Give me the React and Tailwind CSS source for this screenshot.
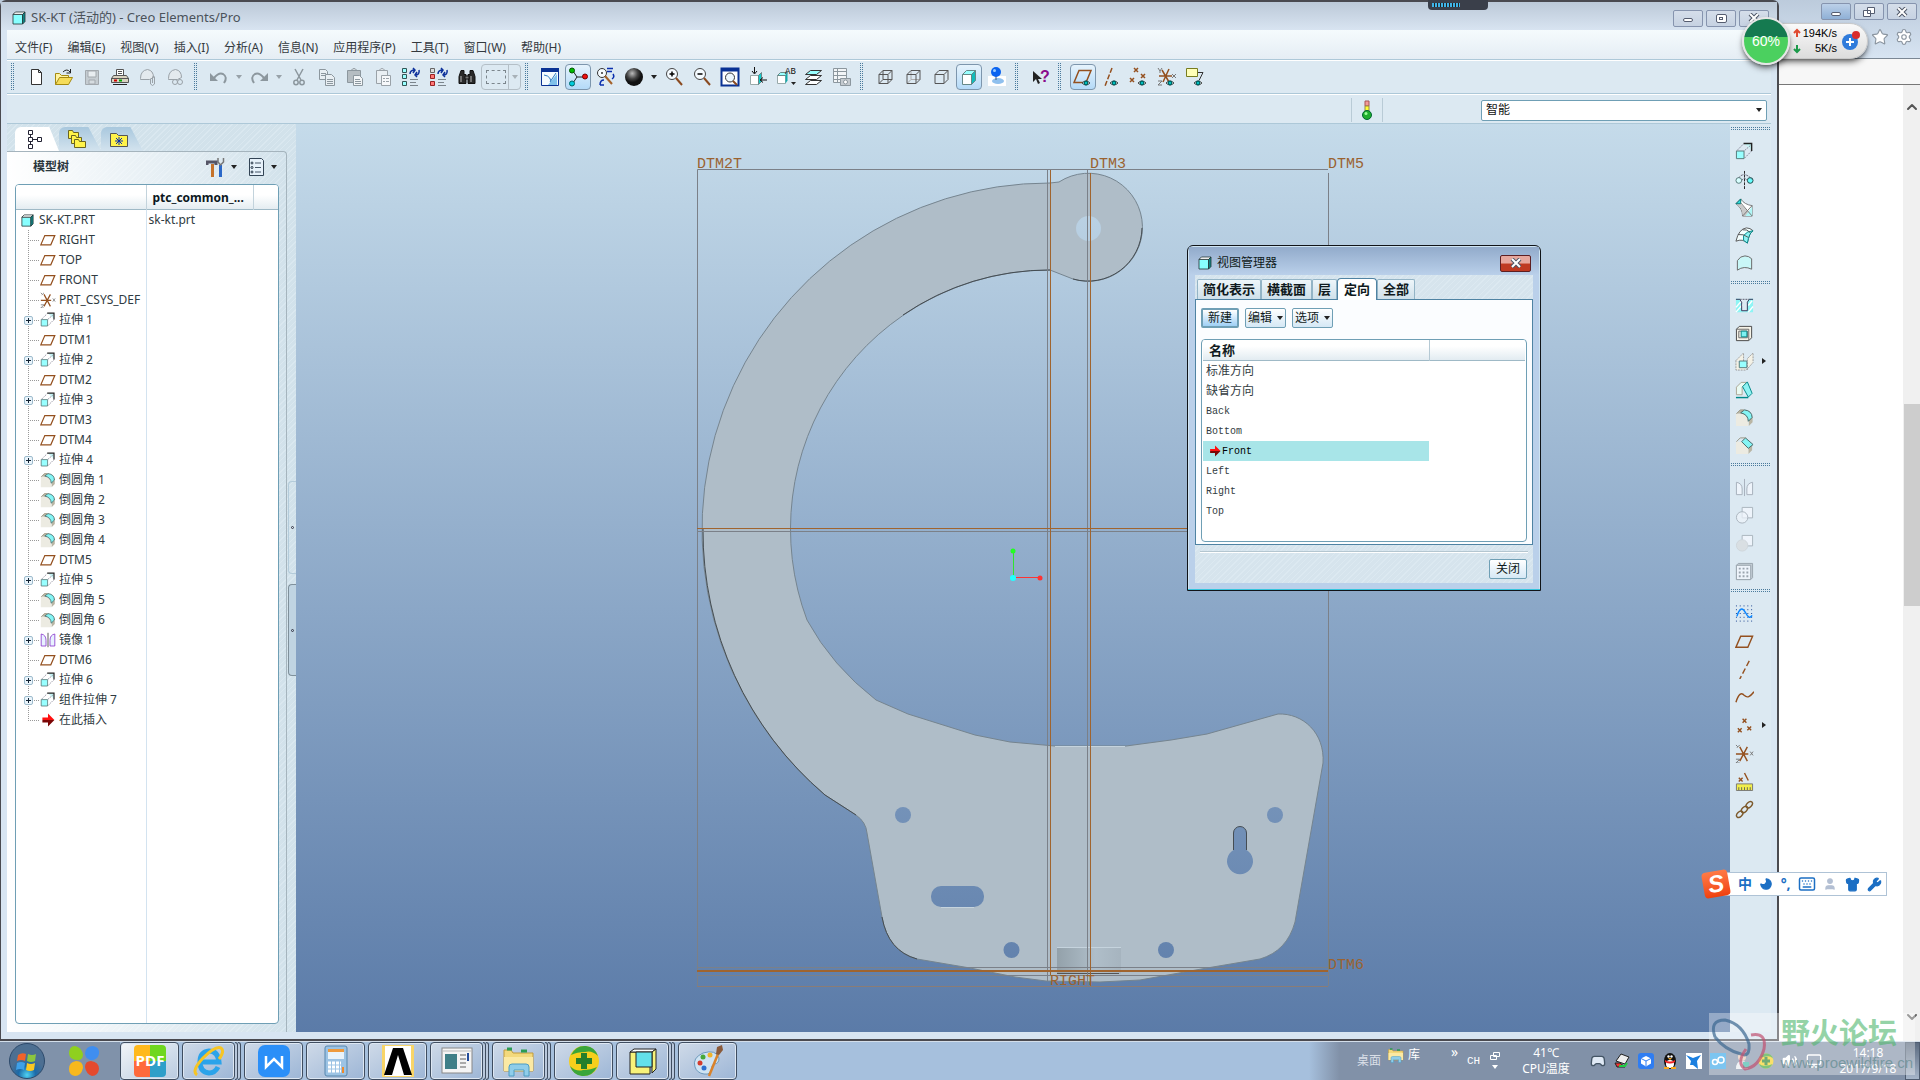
import { Star, Settings, ChevronUp, ChevronDown, Moon, Keyboard, User, Shirt, Wrench, Volume2, Monitor, Gamepad2 } from 'lucide-react';

const MENUS = ['文件(F)', '编辑(E)', '视图(V)', '插入(I)', '分析(A)', '信息(N)', '应用程序(P)', '工具(T)', '窗口(W)', '帮助(H)'];

const TREE = [
  { icon: 'plane', label: 'RIGHT' },
  { icon: 'plane', label: 'TOP' },
  { icon: 'plane', label: 'FRONT' },
  { icon: 'csys', label: 'PRT_CSYS_DEF' },
  { icon: 'extrude', label: '拉伸 1', plus: true },
  { icon: 'plane', label: 'DTM1' },
  { icon: 'extrude', label: '拉伸 2', plus: true },
  { icon: 'plane', label: 'DTM2' },
  { icon: 'extrude', label: '拉伸 3', plus: true },
  { icon: 'plane', label: 'DTM3' },
  { icon: 'plane', label: 'DTM4' },
  { icon: 'extrude', label: '拉伸 4', plus: true },
  { icon: 'round', label: '倒圆角 1' },
  { icon: 'round', label: '倒圆角 2' },
  { icon: 'round', label: '倒圆角 3' },
  { icon: 'round', label: '倒圆角 4' },
  { icon: 'plane', label: 'DTM5' },
  { icon: 'extrude', label: '拉伸 5', plus: true },
  { icon: 'round', label: '倒圆角 5' },
  { icon: 'round', label: '倒圆角 6' },
  { icon: 'mirror', label: '镜像 1', plus: true },
  { icon: 'plane', label: 'DTM6' },
  { icon: 'extrude', label: '拉伸 6', plus: true },
  { icon: 'extrude', label: '组件拉伸 7', plus: true },
  { icon: 'arrow', label: '在此插入' },
];

const VIEWS = ['标准方向', '缺省方向', 'Back', 'Bottom', 'Front', 'Left', 'Right', 'Top'];

// '|' is a grip, 'v' a greyed drop-down caret, 'V' an enabled one
const TOOLBAR = [
  '|', 'new', 'open', 'save', 'print', 'attach', 'link',
  '|', 'undo', 'v', 'redo', 'v', 'cut', 'copy', 'paste', 'pasteSpecial', 'regen', 'regenRed', 'find', 'select',
  '|', 'sketchView', 'spin', 'orient', 'sphere', 'V', 'zoomIn', 'zoomOut', 'zoomFit', 'reorient', 'viewList', 'layers', 'viewMgr',
  '|', 'wire', 'hidden', 'noHidden', 'shaded', 'render',
  '|', 'help',
  '|', 'planeEye', 'axisEye', 'pointEye', 'csysEye', 'noteEye',
];
const PRESSED = ['spin', 'shaded', 'planeEye'];

const SIDEBAR = [
  '|', 'extrude', 'revolve', 'sweep', 'boundary', 'style',
  '|', 'hole', 'shell', 'rib', 'draft', 'round', 'chamfer',
  '|', 'mirrorOff', 'merge', 'trim', 'pattern',
  '|', 'sketch', 'plane', 'axis', 'curve', 'points', 'csys', 'analysis', 'chain',
];
const FLYOUT = ['rib', 'points'];

const BR = '#94501f';
const CY = '#98ffff';

function Eye() {
  return (
    <g stroke="none">
      <path d="M9 16q4-4 8 0q-4 4-8 0" fill="#fff" stroke="#444" strokeWidth="1" />
      <circle cx="13" cy="16" r="2.4" fill="#066" />
      <circle cx="13" cy="16" r="1" fill="#0dd" />
    </g>
  );
}

const cubeEdges = 'M4 7.500h9v9h-9zM13 7.500l4-4v9l-4 4M4 7.500l4-4h9';

const ICONS = {
  new: <path d="M5.500 2.500h7l3 3v12h-10zM12.500 2.500v3h3" fill="#fff" stroke="#333" />,
  open: (
    <g>
      <path d="M1.500 17.500v-11h4l2 2h7v3" fill="#fff3a0" stroke="#a58a10" />
      <path d="M1.500 17.500l4-7h13l-4 7z" fill="#f5dc5a" stroke="#a58a10" />
      <path d="M9 5q4-4 7 0M16.500 2v4h-4" stroke="#222" />
    </g>
  ),
  save: (
    <g stroke="#a3a9ae">
      <path d="M3.500 3.500h13v14h-13z" fill="#c5ccd1" />
      <path d="M6 4h8v6h-8z" fill="#e8edf0" />
      <path d="M7 13h6v4h-6z" fill="#d6dce0" />
    </g>
  ),
  print: (
    <g stroke="#555">
      <path d="M6.500 8.500v-6h7v6M8 4.500h4M8 6.500h4" fill="#fff" />
      <path d="M3.500 8.500h13l2 3h-17zM1.500 11.500h17v4h-17z" fill="#d9d2c0" />
      <path d="M3 17.500h14" stroke="#222" />
      <path d="M4 13.500h3" stroke="#c00" strokeWidth="2" />
      <path d="M9 13.500h3" stroke="#0a0" strokeWidth="2" />
    </g>
  ),
  attach: (
    <g stroke="#9aa2a8">
      <path d="M2.500 11.500q0-8 7-9q6 1 6 8l-4 2h-9z" fill="#e4eaee" />
      <path d="M12.500 12v5q2 3 4 0v-7q-1-2-2 0v6" fill="none" />
    </g>
  ),
  link: (
    <g stroke="#9aa2a8">
      <path d="M2.500 11.500q0-8 7-9q6 1 6 8l-4 2h-9z" fill="#e4eaee" />
      <circle cx="9" cy="15" r="2.500" />
      <circle cx="14" cy="15" r="2.500" />
    </g>
  ),
  undo: (
    <g>
      <path d="M5 11q5-6 9-4q5 3 1 9" stroke="#8c979e" strokeWidth="2" />
      <path d="M1 6v8h8z" fill="#8c979e" />
    </g>
  ),
  redo: (
    <g>
      <path d="M15 11q-5-6-9-4q-5 3-1 9" stroke="#8c979e" strokeWidth="2" />
      <path d="M19 6v8h-8z" fill="#8c979e" />
    </g>
  ),
  cut: (
    <g stroke="#8c979e" strokeWidth="1.5">
      <path d="M6 2l6 11M14 2l-6 11" />
      <circle cx="7" cy="15.500" r="2.200" />
      <circle cx="13" cy="15.500" r="2.200" />
    </g>
  ),
  copy: (
    <g stroke="#8c979e" fill="#e9eff3">
      <path d="M2.500 2.500h6l2 2v8h-8zM4 6.500h5M4 8.500h5" />
      <path d="M8.500 7.500h6l3 3v8h-9zM10 12.500h6M10 14.500h6M10 16.500h6" />
    </g>
  ),
  paste: (
    <g stroke="#8c979e">
      <path d="M2.500 3.500h13v12h-13z" fill="#b5bdc2" />
      <path d="M6 3.500q3-4 6 0z" fill="#dde3e6" />
      <path d="M8.500 8.500h6l3 3v7h-9zM10 12.500h5M10 14.500h6M10 16.500h6" fill="#f2f5f7" />
    </g>
  ),
  pasteSpecial: (
    <g stroke="#9aa2a8" fill="#e9eff3">
      <path d="M3.500 3.500h11v13h-11z" />
      <path d="M6 3.500q3-4 6 0z" />
      <path d="M8.500 8.500h9v10h-9zM10 11.500h2M13 11.500h3M10 14.500h2M13 14.500h3" fill="#f6f8fa" />
    </g>
  ),
  regen: (
    <g>
      <path d="M1.500 1.500h4v4h-4zM1.500 7.500h4v4h-4zM1.500 14.500h4v4h-4z" fill={CY} stroke="#355" />
      <path d="M9 7q0-4 5-4M12 1l2 2-2 3M18 3q1 5-4 5M16 5l-2 3 2 2" stroke="#0b2f9a" strokeWidth="1.500" />
      <path d="M9 12.500h8M9 15.500h6M9 18.500h8" stroke="#7b858c" />
    </g>
  ),
  regenRed: (
    <g>
      <path d="M1.500 1.500h4v4h-4z" fill="#ddd" stroke="#666" />
      <path d="M1.500 7.500h4v4h-4zM1.500 14.500h4v4h-4z" fill="#f77" stroke="#922" />
      <path d="M9 7q0-4 5-4M12 1l2 2-2 3M18 3q1 5-4 5M16 5l-2 3 2 2" stroke="#0b2f9a" strokeWidth="1.500" />
      <path d="M9 12.500h8M9 15.500h6M9 18.500h8" stroke="#7b858c" />
    </g>
  ),
  find: (
    <g fill="#2a2a2a" stroke="#111">
      <path d="M4 3.500h3v4h2v9h-7v-7zM13 3.500h3l2 6v7h-7v-9h2z" />
      <path d="M8 9h4v3h-4z" fill="#777" />
      <path d="M4 9v6M14 9v6" stroke="#bbb" />
    </g>
  ),
  sketchView: (
    <g>
      <path d="M1.500 1.500h17v17h-17z" fill="#f4fbff" stroke="#0a3294" />
      <path d="M1 3h18" stroke="#0a3294" strokeWidth="4" />
      <path d="M4 8q8 1 7 10M16 6l-6 9" stroke="#2d79c0" />
      <path d="M8 18l9-11v11z" fill="#7fc0ea" />
    </g>
  ),
  spin: (
    <g>
      <path d="M5 4l4 6h8M9 10l-4 6" stroke="#222" />
      <circle cx="4" cy="3.500" r="2.500" fill="#0b0" stroke="#050" />
      <circle cx="17" cy="9.500" r="2.500" fill="#e11" stroke="#700" />
      <circle cx="4" cy="16.500" r="2.500" fill="#0cd" stroke="#066" />
    </g>
  ),
  orient: (
    <g>
      <circle cx="6" cy="6" r="4.500" fill="#f5fbff" stroke="#333" />
      <circle cx="6" cy="6" r="1" fill="#333" />
      <path d="M9 9l7 8" stroke="#a5622a" strokeWidth="2" />
      <path d="M11 1.500h6M11 4.500h5M17 7q2 3-1 5M4 18q0-5 4-5M4 18h4" stroke="#0a2fae" strokeWidth="1.500" />
    </g>
  ),
  sphere: <circle cx="10" cy="10" r="9" fill="url(#ball)" />,
  zoomIn: (
    <g>
      <circle cx="8" cy="7" r="5.500" fill="#f5fbff" stroke="#444" />
      <path d="M5.500 7h5M8 4.500v5" stroke="#000" strokeWidth="1.500" />
      <path d="M12 11l6 7" stroke="#8a4a20" strokeWidth="2" />
    </g>
  ),
  zoomOut: (
    <g>
      <circle cx="8" cy="7" r="5.500" fill="#f5fbff" stroke="#444" />
      <path d="M5.500 7h5" stroke="#000" strokeWidth="1.500" />
      <path d="M12 11l6 7" stroke="#8a4a20" strokeWidth="2" />
    </g>
  ),
  zoomFit: (
    <g>
      <path d="M1.500 1.500h17v17h-17z" fill="#fff" stroke="#0a3294" strokeWidth="2" />
      <path d="M2 3h16" stroke="#0a3294" strokeWidth="3" />
      <circle cx="10" cy="10.500" r="4.500" fill="#eef8ff" stroke="#333" />
      <path d="M13 14l4 4" stroke="#8a4a20" strokeWidth="2" />
    </g>
  ),
  reorient: (
    <g>
      <path d="M2.500 8.500h8v9h-8z" fill="#fff" stroke="#9aa" />
      <path d="M10.500 8.500l3-3v9l-3 3z" fill="#1cc" stroke="#688" />
      <path d="M6.500 0v6M4 4l2.500 3 2.500-3M19 13h-6M15 10.500l-3 2.500 3 2.500" stroke="#111" />
    </g>
  ),
  viewList: (
    <g>
      <path d="M1.500 8.500h8v8h-8z" fill="#fff" stroke="#9aa" />
      <path d="M1.500 8.500l3-3h7l-2 3z" fill={CY} stroke="#688" />
      <path d="M9.500 8.500l2-3v8l-2 3z" fill="#1aa" />
      <text x="9" y="7" fontSize="9" fontFamily="Liberation Mono" fill="#111">AB</text>
      <path d="M15 15h5l-2.500 3z" fill="#222" />
    </g>
  ),
  layers: (
    <g stroke="#333">
      <path d="M1.500 17.500l5-4h11l-5 4z" fill="#fff" />
      <path d="M1.500 12.500l5-4h11l-5 4z" fill="#fff" />
      <path d="M1.500 7.500l5-4h11l-5 4z" fill={CY} />
    </g>
  ),
  viewMgr: (
    <g stroke="#8c979e">
      <path d="M1.500 1.500h13v14h-13zM1.500 4.500h13M1.500 8.500h13M1.500 12.500h13M5.500 1.500v14" fill="#f2f5f7" />
      <path d="M8.500 11.500h10v7h-10z" fill="#c4cacf" />
      <circle cx="13.500" cy="15" r="2" fill="#fff" />
    </g>
  ),
  wire: <path d={cubeEdges + 'M8 3.500v9h9M8 12.500l-4 4'} stroke="#555" />,
  hidden: (
    <g>
      <path d="M8 3.500v9h9M8 12.500l-4 4" stroke="#aaa" />
      <path d={cubeEdges} stroke="#555" />
    </g>
  ),
  noHidden: <path d={cubeEdges} stroke="#555" />,
  shaded: (
    <g stroke="#688">
      <path d="M3.500 7.500h9v10h-9z" fill="#fff" />
      <path d="M3.500 7.500l4-4h9l-4 4z" fill={CY} />
      <path d="M12.500 7.500l4-4v10l-4 4z" fill="#1bb" />
    </g>
  ),
  render: (
    <g>
      <path d="M1 9h18v10h-18z" fill="#fff" />
      <ellipse cx="11" cy="14" rx="6" ry="3" fill="#8fc0ee" />
      <path d="M9 8v5" stroke="#457" />
      <circle cx="9" cy="5" r="5" fill="#0a63f0" />
      <circle cx="7.500" cy="3.500" r="1.500" fill="#9cf" />
    </g>
  ),
  help: (
    <g>
      <path d="M3 4v11l3-3 2 5 2-1-2-4h4z" fill="#222" />
      <text x="10" y="15" fontSize="16" fontWeight="bold" fontFamily="Liberation Sans" fill="#8a0a8a">?</text>
    </g>
  ),
  plane: <path d="M6 4.500h12.500l-5 11.500h-12.500z" stroke={BR} strokeWidth="1.500" />,
  planeEye: <g><path d="M6 3.500h12l-5 12h-12z" stroke={BR} strokeWidth="1.500" /><Eye /></g>,
  axisEye: <g><path d="M11 1l-7 18" stroke={BR} strokeWidth="1.500" strokeDasharray="5 2" /><Eye /></g>,
  pointEye: <g><path d="M5 1l4 4M9 1l-4 4M1 11l4 4M5 11l-4 4M12 7l4 4M16 7l-4 4" stroke={BR} strokeWidth="1.500" /><Eye /></g>,
  csysEye: (
    <g>
      <path d="M2 9h13M5 3l7 12M12 2l-6 13" stroke={BR} strokeWidth="1.500" />
      <path d="M1 1l2 3 2-3M3 4v2M1 14h4l-4 4h4M15 7l4 4M19 7l-4 4" stroke="#777" />
      <Eye />
    </g>
  ),
  noteEye: (
    <g>
      <path d="M1.500 1.500h11v8h-11z" fill="#ffffb8" stroke="#777c20" />
      <path d="M13 5.500h5l-4 8" stroke="#333" />
      <Eye />
    </g>
  ),
  extrude: (
    <g>
      <path d="M10 2h7v6z" fill="#c4f4f5" />
      <path d="M2 9l7-7M10 9l7-6M10 17l8-8" stroke="#889" strokeDasharray="2 1" />
      <path d="M9 1.500h8.500v8" stroke="#222" strokeWidth="1.500" />
      <path d="M1.500 9.500h8v8h-8z" fill={CY} stroke="#577" />
    </g>
  ),
  revolve: (
    <g>
      <circle cx="4" cy="11" r="3" fill="#d8ffff" stroke="#577" />
      <circle cx="16" cy="11" r="3" fill="#6ff" stroke="#244" />
      <path d="M10 1v19" stroke="#222" strokeDasharray="3 1" />
      <path d="M4 8q6-7 14 2M7 11q3-4 6 0" stroke="#556" strokeDasharray="2 1" />
    </g>
  ),
  sweep: (
    <g>
      <path d="M1 6l5-5q4 6 12 7v11h-10q0-8-7-13z" fill="#fff" stroke="#777" />
      <path d="M2 6h4l11 12h-9q0-7-6-12z" fill="#c9c9c9" />
      <path d="M18 9l-7 10h7z" fill="#aff6f6" />
      <path d="M1 6l5-5v5z" fill="#3dd" stroke="#077" />
      <path d="M6 5l12 14M18 8l-10 11" stroke="#777" />
    </g>
  ),
  boundary: (
    <g stroke="#555">
      <path d="M1 16q3-13 11-14q4 0 7 3q-4 2-6 13q-5-5-12-2z" fill="#f4ffff" />
      <path d="M9 10q4-5 10-5q-4 2-6 13l-4-3z" fill="#8ff3f3" stroke="#088" />
      <path d="M3 9q6-1 11 3M8 4q5-1 8 3" />
    </g>
  ),
  style: <path d="M2.500 17v-10q3-5 8-5q4 0 7 3v11q-8-4-15 1z" fill="#c9f7f7" stroke="#666" />,
  hole: (
    <g>
      <path d="M1 3h4l2 3v10h6v-10l2-3h4v14h-18z" fill="#8ef5f5" />
      <path d="M1 12l6-7M1 17l7-8M14 17l5-6M14 10l4-5" stroke="#fff" strokeWidth="1.500" />
      <path d="M1 3.500h4l2 3v9h6v-9l2-3h4" stroke="#335" />
      <path d="M5 3.500h10" stroke="#556" strokeDasharray="2 1" />
    </g>
  ),
  shell: (
    <g>
      <path d="M1.500 5.500l3-3h13v12l-3 3h-13z" fill="#f6f3e8" stroke="#444" />
      <path d="M1.500 5.500h13v12M4 7.500h9v7h-9z" stroke="#666" />
      <path d="M6.500 7.500h6v6h-6z" fill="#7ef2f2" stroke="#088" />
    </g>
  ),
  rib: (
    <g stroke="#999">
      <path d="M1 9l8-8v10M1 9v10h11l7-8v-10l-6 6v12" fill="#f3f1e6" strokeDasharray="2 1" />
      <path d="M4.500 9.500h8v7h-8z" fill={CY} stroke="#577" />
    </g>
  ),
  draft: (
    <g>
      <path d="M1.500 7.500l5-5h6l-5 5v8h-6z" fill="#eafaf2" stroke="#aaa492" />
      <path d="M8 7l5-5 5 12-4 4z" fill="#8ff3f3" stroke="#088" />
      <path d="M1 18.500h13" stroke="#088" strokeWidth="1.500" />
    </g>
  ),
  round: (
    <g>
      <path d="M1.500 6l4-4h4q8 1 9 8v5l-4 4v-5q-1-8-9-8z" fill="#b9b5a4" />
      <path d="M1 6h5q8 1 8 8v5h-13z" fill="#ecebe2" />
      <path d="M6 5l4-3q8 1 8 8l-4 4q0-7-8-9" fill="#84f5f5" stroke="#466" />
      <path d="M1.500 6l4-4h4" stroke="#999683" />
    </g>
  ),
  chamfer: (
    <g>
      <path d="M14 13l4-4v6l-4 4z" fill="#b9b5a4" />
      <path d="M1 6h6l7 7v6h-13z" fill="#ecebe2" />
      <path d="M7 6l4-4 8 7-5 4z" fill="#84f5f5" stroke="#466" />
      <path d="M1.500 6l4-4h6" stroke="#999683" />
    </g>
  ),
  mirror: (
    <g fill="#e8f2ff" stroke="#8833cc">
      <path d="M1.500 2.500q6 1 6 8v7h-6zM18.500 2.500q-6 1-6 8v7h6z" />
      <path d="M10 1v18" stroke="#333" />
    </g>
  ),
  mirrorOff: (
    <g fill="#eef4fb" stroke="#a5afba">
      <path d="M1.500 4.500q6 1 6 7v6h-6zM18.500 4.500q-6 1-6 7v6h6z" />
      <path d="M10 1v18" />
    </g>
  ),
  merge: (
    <g fill="#eef4fb" stroke="#aab4be">
      <path d="M7.500 1.500h11v11h-11z" />
      <circle cx="7.500" cy="12" r="6" fillOpacity="0.700" />
    </g>
  ),
  trim: (
    <g fill="#eef4fb" stroke="#aab4be">
      <path d="M7.500 1.500h11v11h-11z" />
      <circle cx="7.500" cy="12" r="6" fill="#d9dfe3" stroke="#cfd6db" />
    </g>
  ),
  pattern: (
    <g stroke="#9aa4ae">
      <path d="M1.500 3.500l2-2h15v15l-2 2h-15z" fill="#c2ccd4" />
      <path d="M1.500 3.500h15v15h-15z" fill="#eef4fb" />
      <path d="M4 7h10M4 11h10M4 15h10" strokeWidth="2" strokeDasharray="2 2" />
    </g>
  ),
  sketch: (
    <g>
      <path d="M1 2h18M1 6h18M1 10h18M1 14h18M1 18h18" stroke="#113a8a" strokeDasharray="1 3" />
      <path d="M2 13q4-13 9-4q4 8 7 3" stroke="#0a86ff" strokeWidth="1.500" />
    </g>
  ),
  axis: <path d="M15 1l-10 19" stroke={BR} strokeWidth="1.500" strokeDasharray="6 3" />,
  curve: <path d="M1 15q4-13 9-7q4 4 10-4" stroke={BR} strokeWidth="1.500" />,
  points: <path d="M8 3l4 4M12 3l-4 4M3 13l4 4M7 13l-4 4M13 11l4 4M17 11l-4 4" stroke={BR} strokeWidth="1.500" />,
  csys: (
    <g>
      <path d="M1 10.500h13M5 3l8 15M13 3l-8 15" stroke={BR} strokeWidth="1.500" />
      <path d="M1 1l2 2 2-2M2 4l1-1M1 16h4l-4 4h4M16 8l3 4M19 8l-3 4" stroke="#777" />
    </g>
  ),
  analysis: (
    <g>
      <path d="M4 6l4 4M8 6l-4 4M10 1l4 8" stroke={BR} strokeWidth="1.500" />
      <path d="M1.500 12.500h17v7h-17z" fill="#f1ee4c" stroke="#777" />
      <path d="M4 16v3M7 16v3M10 16v3M13 16v3M16 16v3" stroke="#665" />
    </g>
  ),
  chain: (
    <g stroke="#7d5a2c" strokeWidth="1.500">
      <ellipse cx="5" cy="15" rx="4" ry="2.500" transform="rotate(-45 5 15)" />
      <ellipse cx="10" cy="10" rx="4" ry="2.500" transform="rotate(-45 10 10)" />
      <ellipse cx="15" cy="5" rx="4" ry="2.500" transform="rotate(-45 15 5)" />
    </g>
  ),
  arrow: (
    <g>
      <path d="M3 7h7v-5l8 8h-15z" fill="#ff1010" />
      <path d="M3 10h15l-8 8v-5h-7z" fill="#7c0606" />
    </g>
  ),
  part: (
    <g stroke="#233">
      <path d="M2.500 5.500h12v12h-12z" fill="#8ff" />
      <path d="M2.500 5.500l3-3h12l-3 3z" fill="#fff" />
      <path d="M14.500 5.500l3-3v12l-3 3z" fill="#188" />
    </g>
  ),
  modelTree: <path d="M3.500 1.500h4v4h-4zM3.500 8.500h4v4h-4zM3.500 15.500h4v4h-4zM12.500 8.500h4v4h-4zM5.500 5.500v3M5.500 12.500v3M7.500 10.500h5" fill="#fff" stroke="#223" />,
  folders: (
    <g fill="#fff34a" stroke="#6a6420">
      <path d="M1.500 9.500v-8h4l1 2h5v6z" />
      <path d="M4.500 14.500v-8h4l1 2h5v6z" />
      <path d="M7.500 18.500v-8h4l1 2h6v6z" />
    </g>
  ),
  favorites: (
    <g>
      <path d="M1.500 17.500v-13h6l2 2h9v11z" fill="#fff34a" stroke="#555" />
      <path d="M10 8v8M6 12h8M7 9l6 6M13 9l-6 6" stroke="#0a2fae" />
    </g>
  ),
  tools: (
    <g>
      <path d="M14.500 8v12" stroke="#2a68c8" strokeWidth="3" />
      <path d="M12 1v4l2.500 3 3-3v-4" stroke="#777" strokeWidth="1.500" />
      <path d="M1 8v-3h9v3" stroke="#556" strokeWidth="3" />
      <path d="M6.500 7v13" stroke="#c5722a" strokeWidth="3" />
    </g>
  ),
  settings: (
    <g>
      <path d="M3.500 1.500h12l2 2v15h-14z" fill="#e6f1fa" stroke="#345" />
      <path d="M9 6h6M9 10.500h6M9 15h6" stroke="#456" />
      <circle cx="6" cy="6" r="1" stroke="#234" />
      <circle cx="6" cy="10.500" r="1" stroke="#234" />
      <circle cx="6" cy="15" r="1" stroke="#234" />
    </g>
  ),
};

function Icon({ name, className = 'size-5' }) {
  return (
    <svg viewBox="0 0 20 20" fill="none" className={`shrink-0 ${className}`} aria-hidden="true">
      {ICONS[name]}
    </svg>
  );
}

function Caret({ className = 'text-[#222]' }) {
  return (
    <svg viewBox="0 0 8 8" className={`size-2 shrink-0 ${className}`} aria-hidden="true">
      <path d="M1 2h6l-3 4z" fill="currentColor" />
    </svg>
  );
}

function ToolItem({ name }) {
  if (name === '|') {
    return <span className="mr-[7px] ml-1 h-7 w-1 shrink-0 bg-[conic-gradient(at_1px_1px,transparent_75%,#4a7a9c_0)] bg-[length:2px_2px] first:ml-0" />;
  }
  if (name === 'v' || name === 'V') {
    return (
      <button aria-label="更多" className="flex w-3 items-center justify-center">
        <Caret className={name === 'V' ? 'text-[#222]' : 'text-[#98a2a9]'} />
      </button>
    );
  }
  if (name === 'select') {
    return (
      <button aria-label="select" className="flex h-[26px] w-10 items-center justify-between rounded-sm border border-[#b4bfc7] pl-1">
        <span className="h-3.5 w-5 border border-dashed border-[#7c868d]" />
        <span className="flex h-full w-3 items-center justify-center border-l border-[#b4bfc7]">
          <Caret className="text-[#a8b1b8]" />
        </span>
      </button>
    );
  }
  const pressed = PRESSED.includes(name);
  return (
    <button
      aria-label={name}
      className={`mx-px flex h-[26px] w-[26px] shrink-0 items-center justify-center rounded-sm border ${
        pressed ? 'border-[#7d96ad] bg-linear-to-b from-[#e6f3fc] to-[#b4daf8]' : 'border-transparent'
      }`}
    >
      <Icon name={name} />
    </button>
  );
}

function CloseMark() {
  return (
    <svg viewBox="0 0 12 10" className="h-2.5 w-3">
      <path d="M2 1l8 8M10 1l-8 8" stroke="#4d5566" strokeWidth="4" />
      <path d="M2 1l8 8M10 1l-8 8" stroke="#fff" strokeWidth="2" />
    </svg>
  );
}

function WindowButtons({ active }) {
  const base = 'flex h-[17px] w-[30px] items-center justify-center rounded-xs border border-[#8694ae] bg-linear-to-b';
  return (
    <div className="flex gap-[3px]">
      <button aria-label="minimize" className={`${base} ${active ? 'from-[#bcd0e8] to-[#8fb0d6]' : 'from-[#d5deea] to-[#c6d2e2]'}`}>
        <span className="mt-1 h-1 w-2.5 rounded-xs border border-[#555d70] bg-white" />
      </button>
      <button aria-label="restore" className={`${base} from-[#d5deea] to-[#c6d2e2]`}>
        {active ? (
          <svg viewBox="0 0 12 12" className="size-3">
            <path d="M4.500 1.500h7v6h-7zM.5 4.500h7v6h-7z" fill="#fff" stroke="#555d70" />
          </svg>
        ) : (
          <span className="flex h-[9px] w-[11px] items-center justify-center rounded-xs border border-[#555d70] bg-white">
            <span className="h-[3px] w-1 border border-[#555d70]" />
          </span>
        )}
      </button>
      <button aria-label="close" className={`${base} from-[#d5deea] to-[#c6d2e2]`}>
        <CloseMark />
      </button>
    </div>
  );
}

function ModelTree() {
  return (
    <aside className="relative flex w-[289px] shrink-0 flex-col bg-[repeating-linear-gradient(135deg,#d2e2eb_0_3px,#dae8f0_3px_4px)] pt-[3px]">
      <div className="flex h-6 items-end pl-2">
        <button aria-label="模型树" className="z-10 flex h-6 w-11 items-center rounded-t-md bg-white pl-2.5 [clip-path:polygon(0_0,78%_0,100%_100%,0_100%)]">
          <Icon name="modelTree" />
        </button>
        <button aria-label="文件夹" className="flex h-6 w-[42px] items-center rounded-t-md bg-linear-to-b from-[#a9c8de] to-[#d3e3ee] pl-2 [clip-path:polygon(0_0,70%_0,100%_100%,0_100%)]">
          <Icon name="folders" />
        </button>
        <button aria-label="收藏夹" className="flex h-6 w-[42px] items-center rounded-t-md bg-linear-to-b from-[#a9c8de] to-[#d3e3ee] pl-2 [clip-path:polygon(0_0,70%_0,100%_100%,0_100%)]">
          <Icon name="favorites" />
        </button>
      </div>
      <div className="mr-[9px] flex min-h-0 flex-1 flex-col rounded-tr border-t border-r border-[#a5b4bd] bg-linear-to-r from-white to-transparent pb-2 pl-2">
        <div className="flex h-8 items-center pr-2 pb-0.5 pl-[18px]">
          <h2 className="grow text-[12px] font-bold text-[#2a363d]">模型树</h2>
          <button aria-label="工具" className="mr-2 flex items-center gap-1">
            <Icon name="tools" />
            <Caret />
          </button>
          <button aria-label="设置" className="flex items-center gap-1">
            <Icon name="settings" />
            <Caret />
          </button>
        </div>
        <div className="mr-[7px] min-h-0 flex-1 overflow-hidden rounded border border-[#6f9fb5] bg-white">
          <table className="h-full w-full table-fixed border-collapse text-left text-[12px] leading-5 text-[#2f3b42]">
            <thead>
              <tr className="h-[25px] bg-linear-to-b from-white from-40% to-[#e2ebf0] shadow-[inset_0_-1px_#9fb9c6]">
                <th aria-label="名称" />
                <th className="w-[107px] border-l border-[#c3d3dc] pl-1.5 font-bold text-[#0b171d]">ptc_common_...</th>
                <th aria-label="空" className="w-[25px] border-l border-[#c3d3dc]" />
              </tr>
            </thead>
            <tbody>
              <tr className="h-5">
                <td className="p-0">
                  <div className="flex h-5 items-center gap-1 pl-1">
                    <Icon name="part" className="size-[15px]" />
                    SK-KT.PRT
                  </div>
                </td>
                <td colSpan={2} className="border-l border-[#d3e3f0] p-0 pl-0.5">sk-kt.prt</td>
              </tr>
              {TREE.map((row, i) => (
                <tr key={row.label} className="h-5">
                  <td className="p-0">
                    <div className="flex h-5 items-center">
                      <svg viewBox="0 0 24 20" className="h-5 w-6 shrink-0" fill="none" aria-hidden="true">
                        <path d={`M12.500 0v${i === TREE.length - 1 ? 10 : 20}M12 10.500h12`} stroke="#999" strokeDasharray="1 1" />
                        {row.plus && (
                          <g>
                            <rect x="8.500" y="6.500" width="8" height="8" rx="1.500" fill="#eaf4fb" stroke="#9fbccd" />
                            <path d="M10 10.500h5M12.500 8v5" stroke="#123" />
                          </g>
                        )}
                      </svg>
                      <Icon name={row.icon} className="mr-[3px] size-4" />
                      <span className="whitespace-nowrap">{row.label}</span>
                    </div>
                  </td>
                  <td colSpan={2} className="border-l border-[#d3e3f0] p-0" />
                </tr>
              ))}
              <tr>
                <td />
                <td colSpan={2} className="border-l border-[#d3e3f0]" />
              </tr>
            </tbody>
          </table>
        </div>
      </div>
      <div className="absolute top-[357px] right-0 flex h-[93px] w-2 items-center justify-center rounded-l-sm border border-r-0 border-[#b3cbda]">
        <span className="size-[3px] rounded-full border border-[#334]" />
      </div>
      <div className="absolute top-[460px] right-0 flex h-[92px] w-2 items-center justify-center rounded-l-sm border border-r-0 border-[#7f909b] bg-[#c0d4e2]">
        <span className="size-[3px] rounded-full border border-[#334]" />
      </div>
    </aside>
  );
}

const PART_OUTLINE =
  'M1059 182L1050 183A347 347 0 0 0 825 795L856 815Q866 822 867 833L882 917Q888 951 917 959L970 968L1015 977L1046 981L1100 982L1140 980L1207 968L1260 959Q1287 951 1295 922L1323 763C1325 733 1303 713 1278 714L1207 734L1171 740L1126 746H1055L1010 742L975 735L908 714L876 700Q832 666 807 620A259 259 0 0 1 1050 270L1073 279A54 54 0 1 0 1059 182Z';

function Viewport() {
  return (
    <main className="min-w-0 flex-1 bg-linear-to-b from-[#c5dbea] to-[#5b7ba8]">
      <svg viewBox="296 124 1434 908" className="block h-full w-full" role="img" aria-label="SK-KT">
        <defs>
          <linearGradient id="boss">
            <stop offset="0" stopColor="#93a1aa" />
            <stop offset="0.600" stopColor="#afbec9" />
            <stop offset="1" stopColor="#a6b4bf" />
          </linearGradient>
          <mask id="holes">
            <path d="M296 124h1434v908h-1434z" fill="#fff" />
            <circle cx="1088.500" cy="228.500" r="12.500" />
            <circle cx="903" cy="815" r="8" />
            <circle cx="1275" cy="815" r="8" />
            <circle cx="1011.500" cy="950" r="8" />
            <circle cx="1166" cy="950" r="8" />
            <rect x="931" y="886" width="53" height="21" rx="10" />
            <path d="M1233.500 850v-17a6.500 6.500 0 0 1 13 0v17a13 13 0 1 1-13 0z" />
          </mask>
        </defs>
        <path d={PART_OUTLINE} fill="#afbdc8" stroke="#75848f" mask="url(#holes)" />
        {/* darker edges on the shadow side */}
        <g fill="none" stroke="#454d53">
          <path d="M825 795A347 347 0 0 1 703 529M825 795L856 815M903 315A259 259 0 0 1 1050 270" />
          <path d="M1073 279A54 54 0 0 0 1142 228M882 917Q888 951 917 959" />
          <path d="M1233.500 850v-17a6.500 6.500 0 0 1 13 0v17" />
        </g>
        <path d="M1057 947h64v27h-64z" fill="url(#boss)" />
        <path d="M1057 947.500h64M941 907.500h33M1055 746.500h70" stroke="#c5d3dd" />
        <path d="M1057 973.500h62" stroke="#555" />
        <g fill="none" stroke="#7b8088">
          <path d="M697.500 986V169.500H1328M1328.500 173V986" />
          <path d="M1047.500 169V981M1087.500 169V986M697 531.500H1328M697 967.500H1328M697 975.500H1328" />
          <path d="M697 986.500H1328" stroke="#8a7c76" />
        </g>
        <g fill="none" stroke="#a0642e">
          <path d="M1050.500 170V975M1090.500 173V986M697 528.500H1328" />
          <path d="M697 971H1328" strokeWidth="2" />
        </g>
        <g fill="#9a6230" fontFamily="Liberation Mono" fontSize="15">
          <text x="697" y="168">DTM2T</text>
          <text x="1090" y="168">DTM3</text>
          <text x="1328" y="168">DTM5</text>
          <text x="1328" y="969">DTM6</text>
          <text x="1050" y="985">RIGHT</text>
        </g>
        <path d="M1013.500 578V551" stroke="#2ee52e" />
        <path d="M1013 577.500H1040" stroke="#f33" />
        <circle cx="1013" cy="551" r="2.500" fill="#2f2" />
        <circle cx="1040" cy="578" r="2.500" fill="#f33" />
        <circle cx="1013" cy="578" r="3" fill="#2ff" />
      </svg>
    </main>
  );
}

function CreoWindow() {
  return (
    <section className="flex min-w-0 flex-1 flex-col rounded-t-md border-2 border-l border-[#4a4a50] bg-[#d8e5f2] pr-1.5 pb-[7px] pl-1.5">
      <header className="-mx-1.5 flex h-7 shrink-0 items-center bg-linear-to-b from-[#bcc9d8] to-[#d8e4f1] pt-1 pr-2 pl-2.5">
        <Icon name="part" className="size-4" />
        <h1 className="ml-1 grow text-[13px] text-[#4b525a]">SK-KT (活动的) - Creo Elements/Pro</h1>
        <WindowButtons />
      </header>
      <nav className="flex h-[30px] shrink-0 items-center gap-[15px] border-b border-[#adc8d8] bg-linear-to-b from-[#f5fbfd] to-[#e5edf4] pt-1.5 pl-2 text-[12px] text-[#33393e]">
        {MENUS.map((m) => (
          <button key={m} className="whitespace-nowrap">{m}</button>
        ))}
      </nav>
      <div className="flex h-[34px] shrink-0 items-center border-t border-b border-t-white border-b-[#adc8d8] bg-[#dce9f2] pl-1">
        {TOOLBAR.map((name, i) => (
          <ToolItem key={i} name={name} />
        ))}
      </div>
      <div className="flex h-[30px] shrink-0 items-center justify-end border-t border-b border-t-white border-b-[#adc8d8] bg-[#dce9f2] pt-0.5 pr-1">
        <div className="mr-[98px] flex h-6 w-8 items-center justify-center border-x border-[#b9cbd6]">
          <svg viewBox="0 0 10 20" className="h-5 w-2.5" aria-hidden="true">
            <path d="M3 1h4v5h-4z" fill="#f29a9a" stroke="#a55" />
            <path d="M3 6h4v5h-4z" fill="#ff3" stroke="#984" />
            <circle cx="5" cy="15" r="4.500" fill="#1fae2e" stroke="#063" />
            <circle cx="4" cy="13.500" r="1.500" fill="#9f9" />
          </svg>
        </div>
        <label className="relative flex w-[286px] items-center">
          <span className="sr-only">过滤器</span>
          <select className="h-[21px] w-full appearance-none rounded-xs border border-[#6f9fb5] bg-white pl-1 text-[12px] text-[#111]">
            <option>智能</option>
          </select>
          <span className="pointer-events-none absolute right-1 flex">
            <Caret />
          </span>
        </label>
      </div>
      <div className="flex min-h-0 flex-1">
        <ModelTree />
        <Viewport />
        <div className="flex w-[41px] shrink-0 flex-col bg-[#dce9f2] pt-[3px] pl-px">
          {SIDEBAR.map((name, i) =>
            name === '|' ? (
              <span key={i} className="mb-1.5 h-1 w-10 shrink-0 bg-[conic-gradient(at_1px_1px,transparent_75%,#4a7a9c_0)] bg-[length:2px_2px] not-first:mt-1" />
            ) : (
              <button key={i} aria-label={name} className="flex h-7 items-center gap-2 pl-1">
                <Icon name={name} className="size-[19px]" />
                {FLYOUT.includes(name) && (
                  <svg viewBox="0 0 4 6" className="h-1.5 w-1">
                    <path d="M0 0v6l4-3z" fill="#222" />
                  </svg>
                )}
              </button>
            )
          )}
        </div>
      </div>
    </section>
  );
}

function BrowserWindow() {
  return (
    <section className="flex w-[141px] shrink-0 flex-col bg-white">
      <header className="flex h-[59px] shrink-0 flex-col items-end justify-between border-b border-[#7b8794] bg-linear-to-b from-[#bccbdc] to-[#d7e4f2] pt-[3px] pr-[3px]">
        <WindowButtons active />
        <div className="mr-1 mb-3 flex gap-1.5 text-[#8b95a0]">
          <Star className="size-[18px] fill-white" strokeWidth={1.5} />
          <Settings className="size-[18px] fill-white" strokeWidth={1.5} />
        </div>
      </header>
      <div className="h-[26px] shrink-0 border-b border-[#777] bg-[#f7f7f7]" />
      <div className="flex min-h-0 flex-1 justify-end">
        <div className="flex w-[17px] flex-col items-center bg-[#f0f0f0] pt-3.5 pb-4">
          <ChevronUp className="size-4 shrink-0 text-[#555]" strokeWidth={3} />
          <div className="min-h-0 w-4 grow-[288]" />
          <div className="min-h-0 w-4 grow-[202] bg-[#cdcdcd]" />
          <div className="min-h-0 w-4 grow-[402]" />
          <ChevronDown className="size-4 shrink-0 text-[#666]" strokeWidth={3} />
        </div>
      </div>
    </section>
  );
}

function ViewManager() {
  const tab = 'flex h-5 items-center rounded-t-xs border border-b-0 border-[#93b4c6] bg-linear-to-b from-[#eef6fa] to-[#cfe0ea] px-[5px]';
  const btn = 'flex h-5 items-center rounded-xs border border-[#6f9fb5] bg-linear-to-b from-white to-[#d5e8f5]';
  return (
    <section
      role="dialog"
      aria-label="视图管理器"
      className="absolute top-[245px] left-[1187px] flex w-[354px] flex-col rounded-t-md border border-[#101418] bg-[#bad0ea] px-[7px] pt-px pb-[7px] text-[12px] text-[#101a20] shadow-[inset_0_-1px_#35c5dd,inset_0_0_0_1px_#cfe4f2]"
    >
      <header className="-mx-1.5 flex h-7 items-center bg-linear-to-b from-[#92abcb] to-[#bad0ea] pt-1 pr-2 pl-2">
        <Icon name="part" className="size-4" />
        <h2 className="ml-1 grow">视图管理器</h2>
        <button aria-label="close" className="flex h-[17px] w-[31px] items-center justify-center rounded-xs border border-[#5d1f22] bg-linear-to-b from-[#e7a79d] from-45% to-[#bf3a22] to-55%">
          <CloseMark />
        </button>
      </header>
      <div className="bg-[repeating-linear-gradient(135deg,#d6e4ed_0_3px,#dce9f1_3px_4px)]">
        <div role="tablist" className="flex h-6 items-end pl-0.5 text-[13px] font-bold">
          <button role="tab" className={tab}>简化表示</button>
          <button role="tab" className={tab}>横截面</button>
          <button role="tab" className={tab}>层</button>
          <button role="tab" aria-selected="true" className="-mb-px flex h-[22px] items-center rounded-t-sm border border-b-0 border-[#4f83a3] bg-white px-1.5">定向</button>
          <button role="tab" className={tab}>全部</button>
        </div>
        <div className="flex flex-col border border-[#4f83a3] bg-[#fbfdff] px-[5px] pb-0.5">
          <div className="mt-2 flex gap-1.5">
            <button className="flex h-5 w-[38px] items-center justify-center rounded-xs border-2 border-[#6f9fb5] bg-linear-to-b from-white to-[#9fd0f5]">新建</button>
            <button className={`${btn} w-[41px] gap-1 pl-0.5`}>编辑<Caret /></button>
            <button className={`${btn} w-[41px] gap-1 pl-0.5`}>选项<Caret /></button>
          </div>
          <div className="mt-[11px] h-[203px] overflow-hidden rounded border border-[#6f9fb5] bg-white px-px">
            <table className="w-full table-fixed border-collapse text-left text-[#333c42]">
              <thead>
                <tr className="h-[21px] bg-linear-to-b from-white from-30% to-[#e0eaf0] shadow-[inset_0_-1px_#9fb9c6]">
                  <th className="w-[226px] border-r border-[#b5c9d4] pl-1.5 text-[13px] text-[#101a20]">名称</th>
                  <th aria-label="空" />
                </tr>
              </thead>
              <tbody>
                {VIEWS.map((v) => (
                  <tr key={v} className="h-5">
                    <td className={`p-0 ${v === 'Front' ? 'bg-[#a8e5e8] text-black' : ''}`}>
                      <div className={`flex h-5 items-center pl-[3px] ${/^[A-Z]/.test(v) ? "text-[10px] [font-family:'Liberation_Mono',monospace]" : ''}`}>
                        {v === 'Front' && <Icon name="arrow" className="ml-0.5 size-3.5" />}
                        {v}
                      </div>
                    </td>
                    <td />
                  </tr>
                ))}
              </tbody>
            </table>
          </div>
        </div>
        <div className="mx-[5px] mt-1.5 h-0.5 border-t border-[#b4c6d0] bg-white" />
        <div className="flex justify-end pt-1.5 pr-1.5 pb-1">
          <button className={`${btn} w-[38px] justify-center`}>关闭</button>
        </div>
      </div>
    </section>
  );
}

function NetMeter() {
  return (
    <div className="absolute top-[17px] right-[52px] flex items-center [font-family:'Liberation_Sans',sans-serif]">
      <div className="z-10 flex size-12 items-center justify-center rounded-full border-2 border-[#e6e6e6] bg-linear-to-b from-[#157a50] from-40% to-[#4bd05f] to-40% text-[14px] text-white shadow-md shadow-black/50">
        60%
      </div>
      <div className="-ml-6 flex h-9 w-[102px] items-center rounded-full border border-[#c9c9c9] bg-linear-to-b from-[#fafafa] to-[#dcdcdc] pr-1.5 pl-[26px] text-[11px] leading-[15px] text-black shadow-md shadow-black/50">
        <svg viewBox="0 0 8 28" className="h-7 w-2 shrink-0" fill="none" aria-hidden="true">
          <path d="M4 10V3M1 6l3-3 3 3" stroke="#e04a30" strokeWidth="2" />
          <path d="M4 18v7M1 22l3 3 3-3" stroke="#1c9a4a" strokeWidth="2" />
        </svg>
        <div className="flex grow flex-col items-end pr-1">
          <span>194K/s</span>
          <span>5K/s</span>
        </div>
        <svg viewBox="0 0 20 20" className="size-5 shrink-0" aria-hidden="true">
          <circle cx="9" cy="11" r="8" fill="#2f7bdb" />
          <path d="M9 7v8M5 11h8" stroke="#fff" strokeWidth="2" />
          <circle cx="15" cy="4" r="4" fill="#d92c2c" />
        </svg>
      </div>
    </div>
  );
}

function ImeBar() {
  return (
    <div className="absolute top-[871px] right-[33px] flex items-center">
      <span className="z-10 flex size-[26px] -rotate-10 items-center justify-center rounded-sm bg-linear-to-b from-[#ff7a45] to-[#f0400a] text-[24px] leading-6 font-black text-white italic [font-family:'Liberation_Sans',sans-serif]">S</span>
      <div className="-ml-3 flex h-6 w-[170px] items-center justify-between border border-[#afc3d6] bg-white pr-1 pl-5 text-[#1c6fc4]">
        <span className="text-[14px] leading-5 font-bold">中</span>
        <Moon className="size-3.5 -rotate-90 fill-current" />
        <span className="text-[14px] leading-5 font-bold">°,</span>
        <Keyboard className="size-[18px]" />
        <User className="size-3.5 fill-current text-[#b3bfd3]" />
        <Shirt className="size-[15px] fill-current" />
        <Wrench className="size-[15px] fill-current" />
      </div>
    </div>
  );
}

const TASKS = [
  {
    id: 'pdf',
    lit: true,
    icon: (
      <g>
        <path d="M0 4q0-4 4-4h12v16h-16z" fill="#ffb91d" />
        <path d="M16 0h12q4 0 4 4v12h-16z" fill="#6fd71f" />
        <path d="M0 16h16v16h-12q-4 0-4-4z" fill="#ff6a3c" />
        <path d="M16 16h16v12q0 4-4 4h-12z" fill="#2f9fc9" />
        <text x="16" y="21" textAnchor="middle" fontSize="15" fontWeight="bold" fontFamily="Open Sans" fill="#fff">PDF</text>
      </g>
    ),
  },
  {
    id: 'ie',
    stacked: true,
    icon: (
      <g fill="none">
        <path d="M25 22q-3 6-9 6q-9-1-9-11q0-10 9-11q9 0 10 11h-18" stroke="#2ba3ea" strokeWidth="5" />
        <path d="M4 30q-6-4 6-17q13-13 18-10q4 3-2 11" stroke="#f6c524" strokeWidth="3" />
      </g>
    ),
  },
  {
    id: 'wps',
    icon: (
      <g>
        <rect width="32" height="32" rx="7" fill="#2b8ff8" />
        <path d="M8 11v11l8-8 8 8v-11" fill="none" stroke="#fff" strokeWidth="2.500" />
      </g>
    ),
  },
  {
    id: 'calc',
    icon: (
      <g>
        <rect x="5" y="1" width="22" height="30" rx="2" fill="#9cc3e4" stroke="#5686ad" />
        <path d="M8 4h16v3h-16z" fill="#ee9a3c" />
        <path d="M8 7h16v7h-16z" fill="#e9f3fa" />
        <path d="M8 18h13M8 22h13M8 26h13" stroke="#fff" strokeWidth="3" strokeDasharray="3 1" />
        <path d="M22 22h2v6h-2z" fill="#ee8a2c" />
      </g>
    ),
  },
  {
    id: 'logo',
    icon: (
      <g>
        <path d="M0 0h32v32h-32z" fill="#f8d568" />
        <path d="M3 1h26v30h-26z" fill="#fff" />
        <path d="M11 3h10l9 27h-8l-6-20-6 20h-8z" fill="#000" />
      </g>
    ),
  },
  {
    id: 'viewer',
    stacked: true,
    icon: (
      <g>
        <rect x="1" y="3" width="30" height="25" fill="#f4f4f4" stroke="#888" />
        <path d="M2 6h28" stroke="#bbb" />
        <path d="M4 9h12v15h-12z" fill="#3f7f87" />
        <path d="M19 10h6M19 14h6M19 18h6M19 22h6" stroke="#aaa" strokeWidth="2" />
        <path d="M27 8v8" stroke="#234c9a" strokeWidth="2" />
      </g>
    ),
  },
  {
    id: 'explorer',
    stacked: true,
    icon: (
      <g>
        <path d="M1 5h7l2 3h20v18h-29z" fill="#f3d97c" stroke="#c39b3a" />
        <path d="M4 4h5M18 6h6" stroke="#2b9b53" strokeWidth="3" />
        <path d="M1 12h29v14h-29z" fill="#fbe9a3" />
        <path d="M6 31v-9q0-3 3-3h14q3 0 3 3v9h-5v-6h-10v6z" fill="#8fcdea" stroke="#4c9cc2" />
      </g>
    ),
  },
  {
    id: 'safe',
    icon: (
      <g>
        <circle cx="16" cy="16" r="15" fill="#f6cf1c" />
        <path d="M3 10q5-10 15-9q9 1 12 10q-6-6-13-4q-8 0-14 3M29 22q-5 10-15 9q-9-1-12-10q6 6 13 4q8 0 14-3" fill="#3aa53a" />
        <path d="M13 8h6v5h5v6h-5v5h-6v-5h-5v-6h5z" fill="#257f2b" />
      </g>
    ),
  },
  {
    id: 'creo',
    stacked: true,
    icon: (
      <g stroke="#222">
        <path d="M3 7h20v22h-20z" fill="#f7f27a" />
        <path d="M3 7l4-3h22l-4 3z" fill="#fff" />
        <path d="M25 7l4-3v20l-4 4z" fill="#f7f27a" />
        <path d="M9 7h16v15h-16z" fill="#63e0ea" />
      </g>
    ),
  },
  {
    id: 'paint',
    icon: (
      <g>
        <path d="M3 22q-3-9 8-14q13-4 16 5q0 6-5 6q-3 1-2 5q-1 6-8 5q-7-1-9-7z" fill="#cfe4f3" stroke="#6c98bb" />
        <circle cx="8" cy="18" r="2.500" fill="#d43c2e" />
        <circle cx="11" cy="12" r="2.500" fill="#46a83a" />
        <circle cx="18" cy="10" r="2.500" fill="#f0b32b" />
        <circle cx="12" cy="23" r="2.500" fill="#2e71d0" />
        <path d="M17 31l9-22" stroke="#d9822b" strokeWidth="2.500" />
        <path d="M24 9l1-7 5-2 1 5-4 5z" fill="#8a5a3a" />
      </g>
    ),
  },
];

function Taskbar() {
  return (
    <footer className="flex h-[39px] shrink-0 items-stretch border-t border-[#d3deea] bg-[#a6c0dd] text-[12px] text-white">
      <div className="flex w-[120px] shrink-0 items-center bg-[#8092aa] pl-[9px]">
        <button aria-label="开始" className="mr-[23px]">
          <svg viewBox="0 0 36 36" className="size-9">
            <circle cx="18" cy="18" r="17.500" fill="url(#orb)" stroke="#2d4a6b" />
            <path d="M9 12q4-3 8-1l-1 7q-4-2-8 0z" fill="#f0632a" />
            <path d="M19 11q4 2 8 0l-1 7q-4 2-8 0z" fill="#8cc63e" />
            <path d="M8 20q4-2 8 0l-1 7q-4-2-8 0z" fill="#3ea0e8" />
            <path d="M18 20q4 2 8 0l-1 7q-4 2-8 0z" fill="#fcc822" />
          </svg>
        </button>
        <svg viewBox="0 0 32 32" className="size-8" aria-hidden="true">
          <path d="M1 9q0-8 6-8q6 1 8 8q0 6-5 6q-8 0-9-6z" fill="#8fd01f" />
          <path d="M17 8q1-7 8-7q7 1 6 8q-2 7-9 6q-5-2-5-7z" fill="#3f8ef0" />
          <path d="M1 24q0-7 7-8q7 0 7 7q-2 8-8 8q-6-1-6-7z" fill="#f8b81c" />
          <path d="M17 22q0-6 6-6q8 1 8 8q-1 7-7 7q-6-2-7-9z" fill="#e44a2e" />
        </svg>
      </div>
      <div className="flex shrink-0 gap-[3px]">
        {TASKS.map((t) => (
          <button key={t.id} aria-label={t.id} className="flex w-[59px]">
            <span
              className={`flex h-full grow items-center justify-center rounded-sm border border-[#3f4d60] bg-linear-to-br shadow-[inset_0_0_0_1px_#dde7f2] ${
                t.lit ? 'from-[#f2f5f8] to-[#b9cbe0]' : 'from-[#cfdae8] to-[#9db6d6]'
              }`}
            >
              <svg viewBox="0 0 32 32" className="size-8">{t.icon}</svg>
            </span>
            {t.stacked && <span className="h-full w-[3px] rounded-r-sm border border-l-0 border-[#3f4d60] bg-[#b9c8dc]" />}
            {t.stacked && <span className="h-full w-[3px] rounded-r-sm border border-l-0 border-[#3f4d60] bg-[#b9c8dc]" />}
          </button>
        ))}
      </div>
      <div className="grow" />
      <div className="flex w-[611px] shrink-0 items-center bg-linear-to-r from-transparent to-[#8191a8] to-5% pl-12 whitespace-nowrap">
        <span className="text-[#d9dfe7]">桌面</span>
        <svg viewBox="0 0 32 32" className="mr-1 mb-3 ml-[7px] size-4 shrink-0" aria-hidden="true">{TASKS[6].icon}</svg>
        <span className="mb-3 w-[43px] shrink-0">库</span>
        <span className="mb-5 w-4 shrink-0 text-[14px]">»</span>
        <span className="w-[17px] shrink-0 text-[11px] [font-family:'Liberation_Mono',monospace]">CH</span>
        <span className="flex w-[22px] shrink-0 flex-col items-center gap-0.5">
          <svg viewBox="0 0 10 10" className="size-2.5">
            <path d="M3.500 1.500h6v4h-6zM.5 4.500h6v4h-6z" fill="#8191a8" stroke="#fff" />
          </svg>
          <Caret className="text-white" />
        </span>
        <span className="ml-2 flex w-16 shrink-0 flex-col items-center leading-4">
          <span>41℃</span>
          <span>CPU温度</span>
        </span>
        <span className="ml-3 flex w-[232px] shrink-0 items-center justify-between">
          <Gamepad2 className="size-4 fill-[#dfe9f5] text-[#456]" />
          <svg viewBox="0 0 16 16" className="size-4">
            <path d="M2 8l5-7 8 3-4 7z" fill="#eee" stroke="#222" />
            <path d="M1 10h5l5 4h-8z" fill="#e33" stroke="#222" />
            <path d="M5 13h6l2-3" stroke="#2c4" strokeWidth="2" fill="none" />
          </svg>
          <svg viewBox="0 0 16 16" className="size-4">
            <rect width="16" height="16" rx="3" fill="#2f7df2" />
            <path d="M8 3l5 2.500v5l-5 3-5-3v-5z" fill="#fff" />
            <path d="M3 5.500l5 2.500 5-2.500M8 8v5" stroke="#2f7df2" fill="none" />
          </svg>
          <svg viewBox="0 0 16 16" className="size-4">
            <ellipse cx="8" cy="8" rx="6" ry="8" fill="#111" />
            <ellipse cx="8" cy="11" rx="4" ry="4" fill="#fff" />
            <path d="M3 7q5 3 10 0v2q-5 3-10 0z" fill="#e22" />
            <path d="M6 5h4l-2 2zM2 14h5v2h-5zM9 14h5v2h-5z" fill="#f8a81c" />
            <circle cx="6.500" cy="3.500" r="1.200" fill="#fff" />
            <circle cx="9.500" cy="3.500" r="1.200" fill="#fff" />
          </svg>
          <svg viewBox="0 0 16 16" className="size-4">
            <path d="M0 0h16v16h-16z" fill="#fff" />
            <path d="M0 2l7 3 8-3-4 6 1 8-5-4-3 0 1-4z" fill="#1b7fe0" />
          </svg>
          <svg viewBox="0 0 16 16" className="size-4">
            <path d="M0 0h16v16h-16z" fill="#36a6e8" />
            <circle cx="5" cy="9" r="2.500" fill="none" stroke="#fff" strokeWidth="1.500" />
            <circle cx="11" cy="7" r="3" fill="none" stroke="#fff" strokeWidth="1.500" />
          </svg>
          <svg viewBox="0 0 16 16" className="size-4">
            <circle cx="8" cy="4" r="4" fill="#e9c8b4" />
            <path d="M2 16q0-8 6-8q6 0 6 8z" fill="#e9edf0" />
            <path d="M9 9h6v6h-6z" fill="#3cb6a6" />
          </svg>
          <svg viewBox="0 0 32 32" className="size-4">{TASKS[7].icon}</svg>
          <Volume2 className="size-4 fill-white" />
          <Monitor className="size-4" />
        </span>
        <span className="mr-1.5 ml-auto flex w-[62px] shrink-0 flex-col items-center leading-4">
          <span>14:18</span>
          <span>2017/9/18</span>
        </span>
        <button aria-label="显示桌面" className="h-full w-[15px] shrink-0 border border-[#4e5c70] bg-linear-to-b from-[#5c6b80] to-[#a6b5c9]" />
      </div>
    </footer>
  );
}

function Watermark() {
  return (
    <div className="pointer-events-none absolute right-[5px] bottom-[5px] flex h-[62px] w-[206px] flex-col items-end bg-white/35 text-[#4db56c]/60">
      <svg viewBox="0 0 62 62" className="absolute left-0 size-[62px]" fill="none" aria-hidden="true">
        <path d="M6 24q-6-17 10-17q18 4 24 24q1 14-8 10q-16-4-26-17" stroke="#3a6690" strokeOpacity="0.700" strokeWidth="3" />
        <path d="M42 22q16-3 13 14q-5 18-19 20q-9-6 1-20" stroke="#c05070" strokeOpacity="0.700" strokeWidth="3" />
      </svg>
      <span className="pr-[18px] text-[29px] leading-10 font-bold">野火论坛</span>
      <span className="pr-0.5 text-[15px] leading-5 text-[#5f8a8f]/70 [font-family:'Liberation_Sans',sans-serif]">www.proewildfire.cn</span>
    </div>
  );
}

export default function App() {
  return (
    <div className="relative flex h-screen flex-col overflow-hidden bg-[#bccbdc] text-[12px] [font-family:'Noto_Sans','Noto_Sans_CJK_SC',sans-serif]">
      <svg className="absolute size-0" aria-hidden="true">
        <defs>
          <radialGradient id="ball" cx="0.400" cy="0.300">
            <stop offset="0" stopColor="#bbb" />
            <stop offset="0.600" stopColor="#444" />
            <stop offset="1" stopColor="#111" />
          </radialGradient>
          <radialGradient id="orb" cx="0.500" cy="0.900">
            <stop offset="0" stopColor="#4fd2f2" />
            <stop offset="0.500" stopColor="#1b6aa8" />
            <stop offset="1" stopColor="#4d6f92" />
          </radialGradient>
        </defs>
      </svg>
      <div className="flex min-h-0 flex-1">
        <CreoWindow />
        <BrowserWindow />
      </div>
      <Taskbar />
      <div className="absolute top-0 left-[1428px] flex h-2.5 w-[60px] items-center rounded-b-sm bg-[#3a3f4a] px-1">
        <span className="h-1 w-7 bg-[repeating-linear-gradient(90deg,#3fb4e8_0_2px,#222_2px_3px)]" />
      </div>
      <ViewManager />
      <NetMeter />
      <ImeBar />
      <Watermark />
    </div>
  );
}
